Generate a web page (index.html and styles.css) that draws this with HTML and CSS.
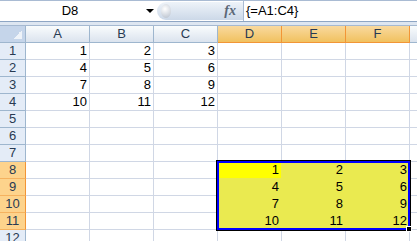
FILE: index.html
```html
<!DOCTYPE html>
<html lang="en">

<head>
    <meta charset="UTF-8">
    <title>Array formula</title>
    <link rel="stylesheet" href="styles.css">
</head>

<body>
    <div class="formula-bar">
        <div class="name-box">
            <span class="ref">D8</span>
            <span class="arrow"></span>
        </div>
        <div class="fx-area">
            <span class="knob"></span>
            <span class="fx">fx</span>
        </div>
        <div class="formula">{=A1:C4}</div>
    </div>
    <div class="separator"></div>

    <div class="sheet">
        <div class="grid">
            <div class="corner"></div>
            <div class="head">A</div>
            <div class="head">B</div>
            <div class="head">C</div>
            <div class="head on">D</div>
            <div class="head on">E</div>
            <div class="head on">F</div>
            <div class="head">G</div>

            <div class="row-head">1</div>
            <div>1</div><div>2</div><div>3</div><div></div><div></div><div></div><div></div>
            <div class="row-head">2</div>
            <div>4</div><div>5</div><div>6</div><div></div><div></div><div></div><div></div>
            <div class="row-head">3</div>
            <div>7</div><div>8</div><div>9</div><div></div><div></div><div></div><div></div>
            <div class="row-head">4</div>
            <div>10</div><div>11</div><div>12</div><div></div><div></div><div></div><div></div>
            <div class="row-head">5</div>
            <div></div><div></div><div></div><div></div><div></div><div></div><div></div>
            <div class="row-head">6</div>
            <div></div><div></div><div></div><div></div><div></div><div></div><div></div>
            <div class="row-head">7</div>
            <div></div><div></div><div></div><div></div><div></div><div></div><div></div>
            <div class="row-head on">8</div>
            <div></div><div></div><div></div><div class="active">1</div><div class="sel">2</div><div class="sel">3</div><div></div>
            <div class="row-head on">9</div>
            <div></div><div></div><div></div><div class="sel">4</div><div class="sel">5</div><div class="sel">6</div><div></div>
            <div class="row-head on">10</div>
            <div></div><div></div><div></div><div class="sel">7</div><div class="sel">8</div><div class="sel">9</div><div></div>
            <div class="row-head on">11</div>
            <div></div><div></div><div></div><div class="sel">10</div><div class="sel">11</div><div class="sel">12</div><div></div>
            <div class="row-head">12</div>
            <div></div><div></div><div></div><div></div><div></div><div></div><div></div>
        </div>

        <div class="selection">
            <span class="handle"></span>
        </div>
    </div>
</body>

</html>
```

FILE: styles.css
```css
* {
    box-sizing: border-box;
    margin: 0;
    padding: 0;
}

body {
    font-family: "Liberation Sans", Arial, sans-serif;
    font-size: 13px;
    color: #000;
    background-color: white;
    width: 417px;
    height: 241px;
    overflow: hidden;
}

/* formula bar */

.formula-bar {
    display: flex;
    height: 22px;
    border-top: 1px solid #a9bbd3;
    border-bottom: 1px solid #8ea6c4;
}

.name-box {
    width: 157px;
    display: flex;
    align-items: center;
}

.name-box .ref {
    width: 140px;
    text-align: center;
    line-height: 20px;
}

.name-box .arrow {
    margin-left: 6px;
    width: 0;
    height: 0;
    border-left: 4px solid transparent;
    border-right: 4px solid transparent;
    border-top: 4px solid #000;
}

.fx-area {
    width: 86px;
    display: flex;
    align-items: center;
    margin: 1px 0;
    padding-left: 4px;
    border-radius: 10px 0 0 10px;
    background: linear-gradient(#eef3f9, #ccd8e8);
}

.knob {
    width: 10px;
    height: 14px;
    border-radius: 50%;
    background: radial-gradient(circle at 40% 35%, #ffffff, #b4bdca);
}

.fx {
    margin-left: auto;
    margin-right: 7px;
    font-family: "Liberation Serif", serif;
    font-style: italic;
    font-weight: bold;
    font-size: 14px;
    color: #5b6777;
}

.formula {
    flex: 1;
    border-left: 1px solid #a9bbd3;
    padding-left: 2px;
    line-height: 20px;
}

.separator {
    height: 4px;
    background-color: #dde6f1;
    border-bottom: 1px solid #a5b9d1;
}

/* sheet */

.sheet {
    position: relative;
}

.grid {
    display: grid;
    grid-template-columns: 26px repeat(7, 64px);
    grid-auto-rows: 17px;
}

.grid > div {
    border-right: 1px solid #d0d7e5;
    border-bottom: 1px solid #d0d7e5;
    padding-right: 2px;
    line-height: 16px;
    text-align: right;
    white-space: nowrap;
    overflow: hidden;
}

.grid .corner {
    border-color: #9eb6ce;
    background:
        linear-gradient(to bottom right, transparent 50%, #eef3f9 50%) no-repeat right 3px bottom 3px / 9px 9px,
        #c5d5ea;
}

.grid .head {
    text-align: center;
    padding: 0;
    color: #283a52;
    border-color: #9eb6ce;
    background: linear-gradient(#f9fcfd, #dbe3ee);
}

.grid .row-head {
    text-align: center;
    padding: 0;
    color: #283a52;
    border-color: #9eb6ce;
    background-color: #e4ecf7;
}

.grid .head.on {
    border-color: #f29536;
    background: linear-gradient(#f9d99f, #f1c15f);
}

.grid .row-head.on {
    border-color: #f29536;
    border-bottom-color: #f5b25f;
    background-color: #fdd38c;
}

.grid .sel {
    background-color: #eaea50;
    border-color: #eaea50;
}

.grid .active {
    background-color: #ffff00;
    border-color: #eaea50;
}

.selection {
    position: absolute;
    left: 217px;
    top: 135px;
    width: 193px;
    height: 69px;
    border: 2px solid #0000ff;
    box-shadow: 0 0 0 1px #000;
}

.handle {
    position: absolute;
    right: -4px;
    bottom: -4px;
    width: 6px;
    height: 6px;
    background-color: #000;
    border: 1px solid #fff;
}
```
